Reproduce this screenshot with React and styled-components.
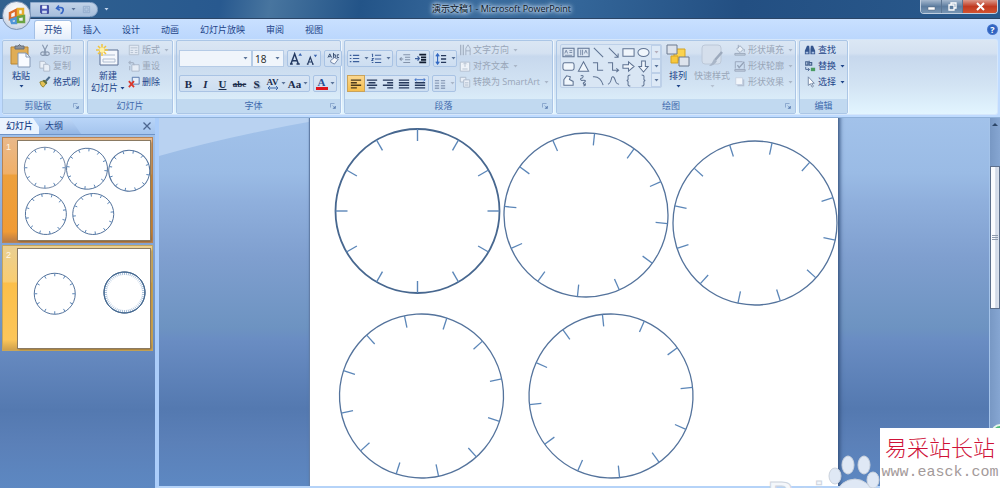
import styled, { createGlobalStyle } from 'styled-components';

const GlobalStyle = createGlobalStyle`
  * { box-sizing: border-box; }
  html, body { margin: 0; height: 100%; overflow: hidden; }
  body, button, select {
    font-family: "Open Sans", "Noto Sans CJK SC", sans-serif;
    font-size: 9px;
    line-height: 12px;
    color: #1d4488;
  }
  button { border: 0; padding: 0; background: none; white-space: nowrap; }
`;

const INK = '#1d4488';
const GREY = '#99a6b8';

/* ---------- drawings ---------- */

const Dial = ({ cx, cy, turn = 0, width = 1.3, color = '#54739c' }) => (
  <g transform={`translate(${cx} ${cy}) rotate(${turn})`} fill="none">
    <circle r="82" stroke={color} strokeWidth={width} vectorEffect="non-scaling-stroke" />
    {Array.from({ length: 12 }, (_, i) => (
      <path
        key={i}
        d="M0 -82V-70"
        transform={`rotate(${i * 30})`}
        stroke="#5b86b8"
        strokeWidth={Math.min(width, 1.4)}
        vectorEffect="non-scaling-stroke"
      />
    ))}
  </g>
);

const FirstSlide = ({ small }) => (
  <SlideArt viewBox="0 0 528 396">
    <Dial cx={107.5} cy={107} width={small ? 1 : 1.8} color={small ? '#7488a6' : '#47678f'} />
    <Dial cx={276} cy={111} turn={6} width={small ? 1 : 1.3} />
    <Dial cx={445} cy={119} turn={12} width={small ? 1 : 1.3} />
    <Dial cx={111.5} cy={292} turn={18} width={small ? 1 : 1.3} />
    <Dial cx={301} cy={292} turn={24} width={small ? 1 : 1.3} />
  </SlideArt>
);

const SecondSlide = () => (
  <SlideArt viewBox="0 0 528 396">
    <Dial cx={147} cy={179} width={1} />
    {[0, 6, 12, 18, 24].map((turn) => (
      <Dial key={turn} cx={426} cy={174} turn={turn} width={0.5} color="#3d6088" />
    ))}
  </SlideArt>
);

const Caret = ({ color = '#5a7399' }) => (
  <svg width="5" height="3" viewBox="0 0 5 3"><path d="M0.5 0H4.5L2.5 2.5Z" fill={color} /></svg>
);

const icons = {
  save: (
    <>
      <path d="M2 2H12V12H3L2 11Z" fill="#4a55b5" stroke="#2f3a8c" />
      <path d="M4 2H10V6H4Z" fill="#eef3fb" />
      <path d="M4 8.500H10V12H4Z" fill="#c9d6ee" />
    </>
  ),
  undo: <path d="M5 2L2 5.500L6 8M2.500 5.500C7 3 12 5 10 9.500C9.500 11 8 12 7 12" fill="none" stroke="#3565c4" strokeWidth="2" />,
  redo: <path d="M3 3H11V11H3ZM5 5H9V9H5Z" fill="none" stroke="#8fa8c9" />,
  cut: <path d="M4 1L8 9M10 1L6 9M5 9.500A2 2 0 1 0 5 13A2 2 0 1 0 5 9.500M9 9.500A2 2 0 1 0 9 13A2 2 0 1 0 9 9.500" fill="none" stroke="#8797ae" strokeWidth="1.300" />,
  copy: (
    <g stroke="#a8b4c6" fill="#e9eff7">
      <path d="M1 1.500H6L8 3.500V9.500H1Z" />
      <path d="M5.500 5H10.500L12.500 7V13H5.500Z" />
    </g>
  ),
  brush: (
    <>
      <path d="M12.500 1L7 7" stroke="#4d6c8c" strokeWidth="2.500" />
      <path d="M1 7L7 5L9 8L5 13Q2 12 1 7" fill="#e5c254" stroke="#8f8232" />
      <path d="M5 5L9 9" stroke="#536a42" strokeWidth="2" />
    </>
  ),
  layout: (
    <g stroke="#b0bccd" fill="#e3eaf4">
      <path d="M1.500 1.500H12.500V12.500H1.500Z" />
      <path d="M3 4.500H11M3 7.500H6M8 7.500H11M3 10H6M8 10H11" />
    </g>
  ),
  reset: (
    <g stroke="#a7b4c7" fill="#e6edf6">
      <path d="M4.500 5.500H13V13H4.500Z" />
      <path d="M1 3H5Q7 3 7 6M3 1L1 3L3 5M2 7V12" fill="none" strokeWidth="1.300" />
    </g>
  ),
  remove: (
    <>
      <path d="M5 1.500H13V9.500H5Z" fill="#e4eefa" stroke="#4b6ea6" />
      <path d="M1 6L7 13M7 6L1 13" stroke="#d9382c" strokeWidth="2" />
    </>
  ),
  textDir: (
    <>
      <path d="M2 1V13M5 1V13" stroke="#9eabbd" strokeWidth="1.300" />
      <path d="M8 13V5L10.500 1L13 5V13M8 8H13" fill="none" stroke="#9eabbd" />
    </>
  ),
  textAlign: (
    <g stroke="#b0bccd" fill="#eef3f9">
      <path d="M1.500 2.500H12.500V13H1.500Z" />
      <path d="M7 3.500V8M5 5L7 3L9 5M4 10.500H10" fill="none" />
    </g>
  ),
  smartArt: (
    <g stroke="#a9b6c8" fill="#e9eff7">
      <path d="M1.500 1.500H8V7H1.500Z" />
      <path d="M5.500 4.500H12.500V13H5.500ZM7 8H11M7 10.500H11" />
    </g>
  ),
  fill: (
    <g stroke="#96a4b8" fill="#eaf0f7">
      <path d="M3 6L7 2L11 6L7 10Z" />
      <path d="M5 1V5M12 6V9" />
      <path d="M1 11H13V13H1Z" fill="#c5d1e1" />
    </g>
  ),
  outline: (
    <g stroke="#94a2b7" fill="none">
      <path d="M1.500 2H10M1.500 2V10M12 4V10" />
      <path d="M4 6L6 9L12 2" strokeWidth="1.500" />
      <path d="M1 11H13V13H1Z" fill="#c5d1e1" />
    </g>
  ),
  effect: (
    <>
      <path d="M4 4H12V12H4Z" fill="#b4c1d3" />
      <path d="M2 2H10V10H2Z" fill="#f2f6fb" stroke="#c3cfdf" />
    </>
  ),
  find: (
    <>
      <path d="M3.500 2H6L6.500 6V12H1V8ZM8 2H10.500L13 8V12H7.500V6Z" fill="#34558e" />
      <path d="M2 9H5V11H2ZM9 9H12V11H9Z" fill="#a9c0e2" />
    </>
  ),
  replace: (
    <>
      <path d="M2 2H4.500V6H2ZM6 1V6H9V3H6" fill="none" stroke="#44608c" strokeWidth="1.300" />
      <path d="M2 8V11H6M4.500 9.500L6.500 11L4.500 13" fill="none" stroke="#44608c" />
      <path d="M8 9H13V13H8Z" fill="#4a9b62" />
    </>
  ),
  select: <path d="M5 1V11L7.500 9L9.500 13L11 12L9 8.500H12Z" fill="#fff" stroke="#6a7f9f" />,
  bullets: (
    <path d="M1 3H3M1 7H3M1 11H3M5 3H13M5 7H13M5 11H13" stroke="#3c5f9b" strokeWidth="1.500" />
  ),
  numbers: (
    <path d="M1 1.500H2V5M1 7H3L1 9.500H3M1 12H3M5 3H13M5 7.500H13M5 12H13" fill="none" stroke="#3c5f9b" strokeWidth="1.300" />
  ),
  outdent: (
    <path d="M5 2H13M7 5H13M7 8H13M5 11H13M1 7H5M3 5L1 7L3 9" fill="none" stroke="#8393aa" strokeWidth="1.200" />
  ),
  indent: (
    <>
      <path d="M5 2H13M7 5H13M7 8H13M5 11H13" stroke="#111c30" strokeWidth="2" />
      <path d="M0 6.500H5M3 4L5 6.500L3 9" fill="none" stroke="#3c5f9b" strokeWidth="1.500" />
    </>
  ),
  spacing: (
    <>
      <path d="M3 1V13M1 4L3 1L5 4M1 10L3 13L5 10" fill="none" stroke="#3268c2" strokeWidth="1.300" />
      <path d="M7 3H13M7 7H13M7 11H13" stroke="#26395c" strokeWidth="1.500" />
    </>
  ),
  left: <path d="M1 2.500H13M1 5.500H8M1 8.500H13M1 11.500H8" stroke="#4b3a1c" strokeWidth="1.700" />,
  center: <path d="M1 2.500H13M3 5.500H11M1 8.500H13M3 11.500H11" stroke="#26395c" strokeWidth="1.700" />,
  right: <path d="M1 2.500H13M6 5.500H13M1 8.500H13M6 11.500H13" stroke="#26395c" strokeWidth="1.700" />,
  justify: <path d="M1 2.500H13M1 5.500H13M1 8.500H13M1 11.500H13" stroke="#26395c" strokeWidth="1.700" />,
  distribute: (
    <>
      <path d="M1 5.500H13M1 8.500H13M1 11.500H13" stroke="#26395c" strokeWidth="1.700" />
      <path d="M1 2H13M3 0L1 2L3 4M11 0L13 2L11 4" fill="none" stroke="#3268c2" />
    </>
  ),
  columns: <path d="M1 3H6M1 6H6M1 9H6M1 12H6M8 3H13M8 6H13M8 9H13M8 12H13" stroke="#8ea0bb" strokeWidth="1.600" />,
  growFont: (
    <>
      <path d="M1 13L5 2L9 13M2.500 9.500H8M0 13H3M7 13H10.500" fill="none" stroke="#243a62" strokeWidth="1.600" />
      <path d="M9 4L11 1L13 4Z" fill="#3a64b0" />
    </>
  ),
  shrinkFont: (
    <>
      <path d="M2 13L5 5L8 13M3 10.500H7M1 13H3M7 13H9" fill="none" stroke="#243a62" strokeWidth="1.400" />
      <path d="M9 2L11 5L13 2Z" fill="#3a64b0" />
    </>
  ),
  clearFont: (
    <>
      <path d="M1 6L3 2L5 6M2 5H4M7 1V6H9V3H7M13 3H11V6H13" fill="none" stroke="#33496e" />
      <path d="M4 9L8 6L12 8L8 13L4 11Z" fill="#f4f7fb" stroke="#6f83a6" />
    </>
  ),
  launcher: (
    <>
      <path d="M1 9V1H9" fill="none" stroke="#7a98c4" strokeWidth="1.500" />
      <path d="M5 5L10 10M11 6V11H6Z" fill="#5a7cb0" stroke="#5a7cb0" />
    </>
  ),
};

const Icon = ({ name, size = 13 }) => (
  <svg width={size} height={size} viewBox="0 0 14 14">{icons[name]}</svg>
);

const shapes = [
  <g key="a"><path d="M1 2.500H13V11.500H1Z" fill="#dce6f2" /><path d="M3 8L4.500 4.500L6 8M8 5H11M8 7H11M3 10H11" strokeWidth="0.800" /></g>,
  <g key="b"><path d="M1 2.500H13V11.500H1Z" fill="#dce6f2" /><path d="M4 4V10M6 4V10M8 8L9.500 4.500L11 8" strokeWidth="0.800" /></g>,
  <path key="c" d="M2 2L12 12" />,
  <path key="d" d="M2 2L12 12M12 8V12H8" />,
  <path key="e" d="M1 3H13V11H1Z" fill="#f0f6fc" />,
  <ellipse key="f" cx="7" cy="7" rx="6" ry="4.300" fill="#f0f6fc" />,
  <rect key="g" x="1" y="3" width="12" height="8" rx="2" fill="#f0f6fc" />,
  <path key="h" d="M7 2L12.500 12H1.500Z" fill="#f0f6fc" />,
  <path key="i" d="M1 3H6V11H12" />,
  <path key="j" d="M1 3H6V11H12M10 9L12.500 11L10 13" />,
  <path key="k" d="M1 5H7V2L13 7L7 12V9H1Z" fill="#f0f6fc" />,
  <path key="l" d="M5 1H9V7H12L7 13L2 7H5Z" fill="#f0f6fc" />,
  <path key="m" d="M2 12V6L5 2L9 3L8 6L12 8V12Z" fill="#f0f6fc" />,
  <path key="n" d="M4 2Q8 1 6 4Q2 5 5 7Q11 6 8 9Q5 10 9 12M7 13L9 12L9 10" />,
  <path key="o" d="M1 3Q9 2 12 12" />,
  <path key="p" d="M1 11Q4 10 5 4Q7 1 9 7Q10 11 13 11" />,
  <path key="q" d="M9 1Q6 1 6.500 4Q7 7 5 7Q7 7 6.500 10Q6 13 9 13" />,
  <path key="r" d="M5 1Q8 1 7.500 4Q7 7 9 7Q7 7 7.500 10Q8 13 5 13" />,
];

const PasteArt = () => (
  <svg width="22" height="24" viewBox="0 0 22 24">
    <path d="M1 3H18V20H1Z" fill="#e0ad55" stroke="#b98532" />
    <path d="M5 5V2H8Q9.500 -1 11 2H14V5Z" fill="#8b929c" stroke="#666e7a" />
    <path d="M8 9H16L20 13V23H8Z" fill="#f8fbff" stroke="#8398b5" />
    <path d="M16 9V13H20" fill="none" stroke="#8398b5" />
  </svg>
);

const NewSlideArt = () => (
  <svg width="24" height="24" viewBox="0 0 24 24">
    <path d="M4 6H22V21H4Z" fill="#f5f8fd" stroke="#5b6f93" />
    <path d="M7 11H19M7 15H19V18H7Z" fill="none" stroke="#b0bdd1" />
    <path d="M6 0V12M0 6H12M2 2L10 10M10 2L2 10" stroke="#f2c53d" strokeWidth="1.500" />
    <circle cx="6" cy="6" r="2.500" fill="#fff2a8" />
  </svg>
);

const ArrangeArt = () => (
  <svg width="24" height="24" viewBox="0 0 24 24">
    <path d="M8 5H19V16H8Z" fill="#fbd34f" stroke="#d3a326" />
    <path d="M5 12H12V19H5Z" fill="#f8c83c" stroke="#d3a326" />
    <path d="M1 1H11V10H1Z" fill="#dde3ec" stroke="#6d7a90" />
    <path d="M13 13H23V22H13Z" fill="#dde3ec" stroke="#6d7a90" />
  </svg>
);

const StylesArt = () => (
  <svg width="24" height="24" viewBox="0 0 24 24">
    <rect x="2" y="1" width="19" height="19" rx="3" fill="#d5dfec" stroke="#bcc8d8" />
    <path d="M22 8L15 16" stroke="#9daabd" strokeWidth="2.500" />
    <path d="M9 22Q14 22 17 17L14 15Q12 20 9 22" fill="#a9b6c8" />
  </svg>
);

const OfficeLogo = () => (
  <svg width="20" height="20" viewBox="0 0 20 20" fill="none" strokeWidth="2.500">
    <path d="M3 7L9 4V11L3 13Z" stroke="#dc6a29" />
    <path d="M11 3H16V9H11Z" stroke="#e5ad2f" />
    <path d="M4 14L9 12V17H5Z" stroke="#4f95d8" />
    <path d="M11 11L17 10V16H11Z" stroke="#6ba343" />
  </svg>
);

/* ---------- app ---------- */

const Command = ({ icon, children, off, caret }) => (
  <CommandButton $off={off}>
    <Icon name={icon} size={12} />
    {children}
    {caret && <CaretSlot><Caret color={off ? '#a9b6c8' : INK} /></CaretSlot>}
  </CommandButton>
);

const RibbonGroup = ({ title, width, launcher, children }) => (
  <Group $width={width} aria-label={title}>
    <GroupBody>{children}</GroupBody>
    <GroupTitle>
      <span>{title}</span>
      {launcher && <Launcher aria-label={`${title}选项`}><Icon name="launcher" size={7} /></Launcher>}
    </GroupTitle>
  </Group>
);

const tabs = ['开始', '插入', '设计', '动画', '幻灯片放映', '审阅', '视图'];

export default function App() {
  return (
    <Window>
      <GlobalStyle />
      <TitleBar>
        <OfficeButton aria-label="Office"><OfficeLogo /></OfficeButton>
        <QuickAccess>
          <button aria-label="保存"><Icon name="save" size={11} /></button>
          <button aria-label="撤消"><Icon name="undo" size={11} /></button>
          <Caret />
          <button aria-label="重复"><Icon name="redo" size={11} /></button>
        </QuickAccess>
        <Caret color="#c4d6ee" />
        <Title>演示文稿1 - Microsoft PowerPoint</Title>
        <WindowButtons>
          <WindowButton aria-label="最小化">
            <svg width="9" height="9" viewBox="0 0 9 9"><path d="M1 5H8V8H1Z" fill="#fff" stroke="#53657e" strokeWidth="0.500" /></svg>
          </WindowButton>
          <WindowButton aria-label="还原">
            <svg width="9" height="9" viewBox="0 0 9 9"><path d="M3 3V1H8V6H6M1 3H6V8H1Z" fill="none" stroke="#fff" strokeWidth="1.300" /></svg>
          </WindowButton>
          <WindowButton $close aria-label="关闭">
            <svg width="9" height="9" viewBox="0 0 9 9"><path d="M1 1L8 8M8 1L1 8" stroke="#fff" strokeWidth="2" /></svg>
          </WindowButton>
        </WindowButtons>
      </TitleBar>

      <TabRow>
        {tabs.map((name, i) => <Tab key={name} $active={i === 0}>{name}</Tab>)}
        <Help aria-label="帮助">?</Help>
      </TabRow>

      <RibbonFrame>
        <Ribbon>
          <RibbonGroup title="剪贴板" width={82} launcher>
            <BigButton $width={32}><PasteArt />粘贴<Caret color={INK} /></BigButton>
            <Commands>
              <Command icon="cut" off>剪切</Command>
              <Command icon="copy" off>复制</Command>
              <Command icon="brush">格式刷</Command>
            </Commands>
          </RibbonGroup>

          <RibbonGroup title="幻灯片" width={86}>
            <BigButton $width={36}>
              <NewSlideArt />新建
              <Inline>幻灯片<Caret color={INK} /></Inline>
            </BigButton>
            <Commands>
              <Command icon="layout" off caret>版式</Command>
              <Command icon="reset" off>重设</Command>
              <Command icon="remove">删除</Command>
            </Commands>
          </RibbonGroup>

          <RibbonGroup title="字体" width={165} launcher>
            <ToolRows>
              <ToolRow>
                <Combos>
                  <Combo $width={73}>
                    <select aria-label="字体"><option> </option></select>
                    <Caret />
                  </Combo>
                  <Combo $width={32}>
                    <select aria-label="字号" defaultValue="18"><option>18</option></select>
                    <Caret />
                  </Combo>
                </Combos>
                <ToolSet>
                  <Tool aria-label="增大字号"><Icon name="growFont" /></Tool>
                  <Tool aria-label="减小字号"><Icon name="shrinkFont" size={12} /></Tool>
                </ToolSet>
                <ToolSet><Tool aria-label="清除格式"><Icon name="clearFont" /></Tool></ToolSet>
              </ToolRow>
              <ToolRow>
                <ToolSet>
                  <Letter>B</Letter>
                  <Letter $italic>I</Letter>
                  <Letter $line="underline">U</Letter>
                  <Letter $small $line="line-through">abc</Letter>
                  <Letter $shadow>S</Letter>
                  <Letter $small $wide>
                    <Spacing>
                      AV
                      <svg width="12" height="4" viewBox="0 0 12 4"><path d="M1 2H11M3 0L1 2L3 4M9 0L11 2L9 4" fill="none" stroke="#3f68a8" /></svg>
                    </Spacing>
                    <Caret />
                  </Letter>
                  <Letter $wide>Aa<Caret /></Letter>
                </ToolSet>
                <ToolSet>
                  <Letter $wide><FontColor>A</FontColor><Caret /></Letter>
                </ToolSet>
              </ToolRow>
            </ToolRows>
          </RibbonGroup>

          <RibbonGroup title="段落" width={209} launcher>
            <ToolRows>
              <ToolRow>
                <ToolSet>
                  <Tool $wide aria-label="项目符号"><Icon name="bullets" size={11} /><Caret /></Tool>
                  <Tool $wide aria-label="编号"><Icon name="numbers" size={11} /><Caret /></Tool>
                </ToolSet>
                <ToolSet>
                  <Tool aria-label="降低列表级别"><Icon name="outdent" size={12} /></Tool>
                  <Tool aria-label="提高列表级别"><Icon name="indent" size={12} /></Tool>
                </ToolSet>
                <ToolSet><Tool $wide aria-label="行距"><Icon name="spacing" size={12} /><Caret /></Tool></ToolSet>
              </ToolRow>
              <ToolRow>
                <ToolSet>
                  <Tool $on aria-label="左对齐"><Icon name="left" size={12} /></Tool>
                  <Tool aria-label="居中"><Icon name="center" size={12} /></Tool>
                  <Tool aria-label="右对齐"><Icon name="right" size={12} /></Tool>
                  <Tool aria-label="两端对齐"><Icon name="justify" size={12} /></Tool>
                  <Tool aria-label="分散对齐"><Icon name="distribute" size={12} /></Tool>
                </ToolSet>
                <ToolSet><Tool $wide aria-label="分栏"><Icon name="columns" size={12} /><Caret color="#a9b6c8" /></Tool></ToolSet>
              </ToolRow>
            </ToolRows>
            <Commands>
              <Command icon="textDir" off caret>文字方向</Command>
              <Command icon="textAlign" off caret>对齐文本</Command>
              <Command icon="smartArt" off caret>转换为 SmartArt</Command>
            </Commands>
          </RibbonGroup>

          <RibbonGroup title="绘图" width={240} launcher>
            <Gallery>
              <ShapeGrid>
                {shapes.map((shape, i) => (
                  <button key={i} aria-label={`形状 ${i + 1}`}>
                    <svg width="13" height="13" viewBox="0 0 14 14" fill="none" stroke="#5f7392" strokeWidth="1.100">{shape}</svg>
                  </button>
                ))}
              </ShapeGrid>
              <GalleryScroll>
                <button aria-label="上一行"><Caret color="#b5aebb" /></button>
                <button aria-label="下一行"><Caret /></button>
                <button aria-label="更多"><Caret /></button>
              </GalleryScroll>
            </Gallery>
            <BigButton $width={28}><ArrangeArt />排列<Caret color={INK} /></BigButton>
            <BigButton $width={40} $off><StylesArt />快速样式<Caret color="#b4c0d0" /></BigButton>
            <Commands>
              <Command icon="fill" off caret>形状填充</Command>
              <Command icon="outline" off caret>形状轮廓</Command>
              <Command icon="effect" off caret>形状效果</Command>
            </Commands>
          </RibbonGroup>

          <RibbonGroup title="编辑" width={49}>
            <Commands>
              <Command icon="find">查找</Command>
              <Command icon="replace" caret>替换</Command>
              <Command icon="select" caret>选择</Command>
            </Commands>
          </RibbonGroup>
        </Ribbon>
      </RibbonFrame>

      <Workspace>
        <SlidePane>
          <PaneTabs>
            <PaneTab $active>幻灯片</PaneTab>
            <PaneTab>大纲</PaneTab>
            <ClosePane aria-label="关闭">
              <svg width="8" height="8" viewBox="0 0 8 8"><path d="M0.500 0.500L7.500 7.500M7.500 0.500L0.500 7.500" stroke="#4c6690" strokeWidth="1.300" /></svg>
            </ClosePane>
          </PaneTabs>
          <ThumbList>
            <ThumbItem $current><ThumbNumber>1</ThumbNumber><Thumb><FirstSlide small /></Thumb></ThumbItem>
            <ThumbItem><ThumbNumber>2</ThumbNumber><Thumb><SecondSlide /></Thumb></ThumbItem>
          </ThumbList>
        </SlidePane>
        <Stage>
          <Canvas>
            <Swoosh viewBox="0 0 160 40"><path d="M0 0H160V2Q70 18 0 38Z" fill="#b9d2f1" /></Swoosh>
            <Slide><FirstSlide /></Slide>
          </Canvas>
          <ScrollBar>
            <ScrollArrow><svg width="6" height="3" viewBox="0 0 6 3"><path d="M0 3L3 0L6 3Z" fill="#2d4668" /></svg></ScrollArrow>
            <ScrollThumb />
          </ScrollBar>
        </Stage>
      </Workspace>

      <BaiduMark>
        <svg width="116" height="34" viewBox="0 0 116 34">
          <g fill="#dfe8f5" stroke="#ccd3dd">
            <ellipse cx="67" cy="22" rx="6" ry="8" />
            <ellipse cx="80" cy="11" rx="6" ry="9" />
            <ellipse cx="96" cy="11" rx="6" ry="9" />
            <ellipse cx="105" cy="26" rx="6" ry="8" />
            <path d="M68 40Q72 26 87 25Q101 26 105 40Z" />
          </g>
          <text x="0" y="54" fontFamily="Liberation Sans" fontSize="36" fontWeight="700" fill="#f4f7fb" stroke="#cfd5de">Bai</text>
        </svg>
      </BaiduMark>
      <GreenDot />
      <SiteMark>
        <SiteName>易采站长站</SiteName>
        <SiteUrl href="#">www.easck.com</SiteUrl>
      </SiteMark>
    </Window>
  );
}

const paneGradient = `linear-gradient(
  #a2c2ea 0%, #9abbe5 15%, #8fafdc 23%, #7f9fcf 38%,
  #6d93c1 57%, #6a8dc3 60%, #5479b0 79%, #5b80b8 88%, #5d88c2 100%
)`;

const Window = styled.div`
  position: relative;
  display: flex;
  flex-direction: column;
  height: 100vh;
  overflow: hidden;
  background: #bfdbff;

  svg { flex: none; }
`;

const TitleBar = styled.header`
  position: relative;
  display: flex;
  align-items: center;
  flex: none;
  gap: 6px;
  height: 19px;
  padding-left: 30px;
  border-bottom: 1px solid #2b4566;
  background: linear-gradient(100deg, #31618f 0%, #28598f 22%, #48759f 27%, #235488 36%, #3b6c9e 48%, #336598 58%, #234f82 74%, #2a5a8d 100%);
`;

const OfficeButton = styled.button`
  position: absolute;
  z-index: 2;
  left: 2px;
  top: 1px;
  display: flex;
  align-items: center;
  justify-content: center;
  width: 29px;
  height: 29px;
  border-radius: 50%;
  border: 1px solid #7b92b2;
  background: radial-gradient(circle at 50% 35%, #fff 0%, #e4e9f1 50%, #b3c2d8 100%);
`;

const QuickAccess = styled.div`
  display: flex;
  align-items: center;
  gap: 5px;
  width: 68px;
  height: 15px;
  padding-left: 8px;
  border-radius: 0 8px 8px 0;
  border: 1px solid #8ea9cb;
  background: linear-gradient(#c2d3e8, #a6bedc);

  button { display: flex; }
`;

const Title = styled.h1`
  flex: 1;
  margin: 0;
  padding-right: 26px;
  text-align: center;
  font-size: 9px;
  font-weight: 400;
  color: #0c1625;
  text-shadow: 0 0 6px #d5e4f4, 0 0 5px #c5d9ee, 0 0 4px #c5d9ee, 0 0 3px #b5cce6;
`;

const WindowButtons = styled.div`
  display: flex;
  align-self: flex-start;
  margin-right: 2px;
  border: 1px solid #c0cfe0;
  border-top: 0;
  border-radius: 0 0 4px 4px;
  overflow: hidden;
`;

const WindowButton = styled.button`
  display: flex;
  align-items: center;
  justify-content: center;
  width: ${(p) => (p.$close ? 34 : 21)}px;
  height: 13px;
  border-right: ${(p) => (p.$close ? 0 : '1px solid #5b7593')};
  background: ${(p) => (p.$close
    ? 'linear-gradient(#dc9a8c, #c03a22 50%, #d4532f)'
    : 'linear-gradient(#a5b8ce, #5c7c9f 50%, #7895b3)')};
`;

const TabRow = styled.nav`
  display: flex;
  align-items: flex-end;
  flex: none;
  gap: 1px;
  height: 20px;
  padding: 0 2px 0 34px;
  background: linear-gradient(#c9e0ff, #bbd7fd);
`;

const Tab = styled.button`
  height: 19px;
  padding: 0 9px;
  border: 1px solid ${(p) => (p.$active ? '#a3c0e6' : 'transparent')};
  border-bottom: 0;
  border-radius: 3px 3px 0 0;
  background: ${(p) => (p.$active ? 'linear-gradient(#fff, #e4eefb)' : 'none')};
`;

const Help = styled.button`
  align-self: center;
  margin-left: auto;
  width: 11px;
  height: 11px;
  border-radius: 50%;
  line-height: 11px;
  font-weight: 700;
  color: #fff;
  background: radial-gradient(circle, #2e62c0 50%, #7ba3e6);
`;

const RibbonFrame = styled.div`
  flex: none;
  padding: 0 2px 2px;
  border-bottom: 1px solid #8fb1d9;
`;

const Ribbon = styled.div`
  display: flex;
  gap: 3px;
  border: 1px solid #d6e7fb;
  border-left: 0;
  border-radius: 3px;
  background: linear-gradient(#dbe7f4 0%, #d4e1f1 18%, #c7d8ed 22%, #d2e3f3 60%, #e2f5ff 100%);
`;

const Group = styled.section`
  display: flex;
  flex-direction: column;
  flex: 0 0 ${(p) => p.$width}px;
  min-width: 0;
  border: 1px solid #abc6e6;
  border-radius: 2px;
  box-shadow: 1px 0 0 #f0f8ff;
`;

const GroupBody = styled.div`
  display: flex;
  height: 58px;
  padding: 1px 2px 0;
`;

const GroupTitle = styled.div`
  display: flex;
  align-items: center;
  justify-content: center;
  height: 14px;
  background: #c1d9f0;
  color: #3f6aad;

  span { flex: 1; text-align: center; }
`;

const Launcher = styled.button`
  display: flex;
  width: 10px;
`;

const BigButton = styled.button`
  display: flex;
  flex: none;
  flex-direction: column;
  align-items: center;
  width: ${(p) => p.$width}px;
  padding-top: 2px;
  color: ${(p) => (p.$off ? GREY : INK)};

  > svg:first-child { height: 24px; margin-bottom: 2px; }
  > svg:last-child { margin-top: 3px; }
`;

const Inline = styled.span`
  display: flex;
  align-items: center;
  gap: 2px;
`;

const Commands = styled.div`
  display: flex;
  flex: none;
  flex-direction: column;
  padding-left: 2px;
`;

const CommandButton = styled.button`
  display: flex;
  align-items: center;
  gap: 2px;
  height: 16px;
  color: ${(p) => (p.$off ? GREY : INK)};
`;

const CaretSlot = styled.span`
  display: flex;
  padding-left: 2px;
`;

const ToolRows = styled.div`
  display: flex;
  flex: none;
  flex-direction: column;
  gap: 8px;
  padding-top: 8px;
`;

const ToolRow = styled.div`
  display: flex;
  gap: 3px;
  height: 17px;
`;

const Combos = styled.div`
  display: flex;
`;

const Combo = styled.div`
  display: flex;
  align-items: center;
  width: ${(p) => p.$width}px;
  padding-right: 3px;
  border: 1px solid #b5cbe6;
  background: #f0f5fb;

  select {
    flex: 1;
    min-width: 0;
    padding: 0 2px;
    border: 0;
    appearance: none;
    background: none;
    font-size: 10px;
    color: #222;
  }
`;

const ToolSet = styled.div`
  display: flex;
  border: 1px solid #a9c3e4;
  border-radius: 2px;
  background: linear-gradient(#d8e5f4, #cddef1);
`;

const Tool = styled.button`
  display: flex;
  align-items: center;
  justify-content: center;
  gap: 4px;
  width: ${(p) => (p.$wide ? 22 : 16)}px;
  background: ${(p) => (p.$on ? 'linear-gradient(#fbd78f, #f6bf4d)' : 'none')};
  outline: ${(p) => (p.$on ? '1px solid #c9a35c' : 'none')};
`;

const Letter = styled.button`
  display: flex;
  align-items: center;
  justify-content: center;
  gap: 2px;
  width: ${(p) => (p.$wide ? 22 : 17)}px;
  font-family: "Liberation Serif", serif;
  font-size: ${(p) => (p.$small ? 9 : 11)}px;
  font-weight: 700;
  font-style: ${(p) => (p.$italic ? 'italic' : 'normal')};
  text-decoration: ${(p) => p.$line || 'none'};
  text-shadow: ${(p) => (p.$shadow ? '1px 1px 1px #7a8aa4' : 'none')};
  color: #1b2c4b;
`;

const Spacing = styled.span`
  display: flex;
  flex-direction: column;
  align-items: center;
  line-height: 8px;
`;

const FontColor = styled.span`
  width: 12px;
  line-height: 10px;
  border-bottom: 3px solid #e0161c;
  color: #2a4f94;
`;

const Gallery = styled.div`
  display: flex;
  flex: none;
  align-self: flex-start;
  margin: 2px 2px 0 1px;
  border: 1px solid #bdd0e8;
  border-radius: 2px;
  background: #d9e6f4;
`;

const ShapeGrid = styled.div`
  display: grid;
  grid-template-columns: repeat(6, 15px);
  grid-auto-rows: 14px;

  button { display: flex; align-items: center; justify-content: center; }
`;

const GalleryScroll = styled.div`
  display: grid;
  width: 10px;

  button {
    display: flex;
    align-items: center;
    justify-content: center;
    border: 1px solid #bdd0e8;
    background: #dde9f6;
  }
`;

const Workspace = styled.main`
  display: flex;
  flex: 1;
  min-height: 0;
`;

const SlidePane = styled.aside`
  flex: 0 0 155px;
  background: ${paneGradient};
`;

const PaneTabs = styled.div`
  display: flex;
  align-items: center;
  height: 17px;
  border-bottom: 1px solid #6f94c8;
  background: linear-gradient(#b9d5f8, #a5c5ee);
`;

const PaneTab = styled.button`
  height: 16px;
  padding: 0 11px 0 6px;
  margin-right: -5px;
  clip-path: polygon(0 0, calc(100% - 11px) 0, 100% 100%, 0 100%);
  font-weight: ${(p) => (p.$active ? 500 : 400)};
  background: ${(p) => (p.$active ? '#eaf3fe' : 'linear-gradient(#bfd8f8, #93b5e3)')};

  & + & { padding: 0 18px 0 6px; }
`;

const ClosePane = styled.button`
  display: flex;
  margin: 0 4px 0 auto;
`;

const ThumbList = styled.ol`
  display: flex;
  flex-direction: column;
  gap: 2px;
  margin: 0;
  padding: 2px;
  list-style: none;
`;

const ThumbItem = styled.li`
  display: flex;
  justify-content: space-between;
  padding: 3px 2px 2px;
  border: 1px solid ${(p) => (p.$current ? '#b98352' : '#c9a659')};
  background: ${(p) => (p.$current
    ? 'linear-gradient(#e9b98a 0%, #f0b069 34%, #eda03c 36%, #f09b35 90%, #b97b45 100%)'
    : 'linear-gradient(#e9cf92 0%, #f9cd72 34%, #fcbf49 36%, #fcc65a 90%, #cfa04c 100%)')};
`;

const ThumbNumber = styled.span`
  padding-left: 1px;
  font-family: "Liberation Sans", sans-serif;
  color: #fff7e8;
`;

const Thumb = styled.div`
  width: 132px;
  background: #fff;
  box-shadow: 0 0 0 1px #8b7a62, 1px 1px 2px #5b4525;
`;

const SlideArt = styled.svg`
  display: block;
  width: 100%;
`;

const Stage = styled.div`
  display: flex;
  flex: 1;
  min-width: 0;
  border-left: 4px solid #abcdfa;
  border-bottom: 2px solid #b5d3f8;
  box-shadow: inset 1px 0 0 #7da3d6;
`;

const Canvas = styled.div`
  position: relative;
  display: flex;
  align-items: center;
  justify-content: center;
  flex: 1;
  min-width: 0;
  overflow: hidden;
  background: ${paneGradient};
`;

const Swoosh = styled.svg`
  position: absolute;
  left: 0;
  top: 0;
  width: 160px;
`;

const Slide = styled.article`
  position: relative;
  flex: 0 1 528px;
  background: #fff;
  box-shadow: 2px 0 4px #35527e, -1px 0 1px #6885ad;
`;

const ScrollBar = styled.div`
  flex: 0 0 11px;
  border-left: 1px solid #a5c4ea;
  background: linear-gradient(90deg, #7898c4, #86a6d2);
`;

const ScrollArrow = styled.div`
  display: flex;
  justify-content: center;
  height: 13%;
  padding-top: 5px;
`;

const ScrollThumb = styled.div`
  height: 39%;
  border: 1px solid #5d6f8c;
  background:
    repeating-linear-gradient(#8e9aac 0 1px, transparent 1px 2px) center / 6px 6px no-repeat,
    linear-gradient(90deg, #fafbfe 0 45%, #ced6e5 60%, #dde3ee);
`;

const BaiduMark = styled.div`
  position: absolute;
  right: 116px;
  bottom: 0;
  height: 34px;
`;

const GreenDot = styled.span`
  position: absolute;
  right: -9px;
  bottom: 46px;
  width: 18px;
  height: 18px;
  border: 2px solid #e6f6ea;
  border-radius: 50%;
  background: #4fb87a;
`;

const SiteMark = styled.div`
  position: absolute;
  right: 0;
  bottom: 0;
  display: flex;
  flex-direction: column;
  align-items: center;
  width: 120px;
  height: 60px;
  padding-top: 3px;
  background: #fff;
`;

const SiteName = styled.strong`
  font-family: "Noto Sans CJK SC", sans-serif;
  font-size: 22px;
  font-weight: 300;
  line-height: 30px;
  color: #cf1238;
`;

const SiteUrl = styled.a`
  font-family: "Liberation Mono", monospace;
  font-size: 15px;
  line-height: 24px;
  text-decoration: none;
  color: #a39a9a;
`;
